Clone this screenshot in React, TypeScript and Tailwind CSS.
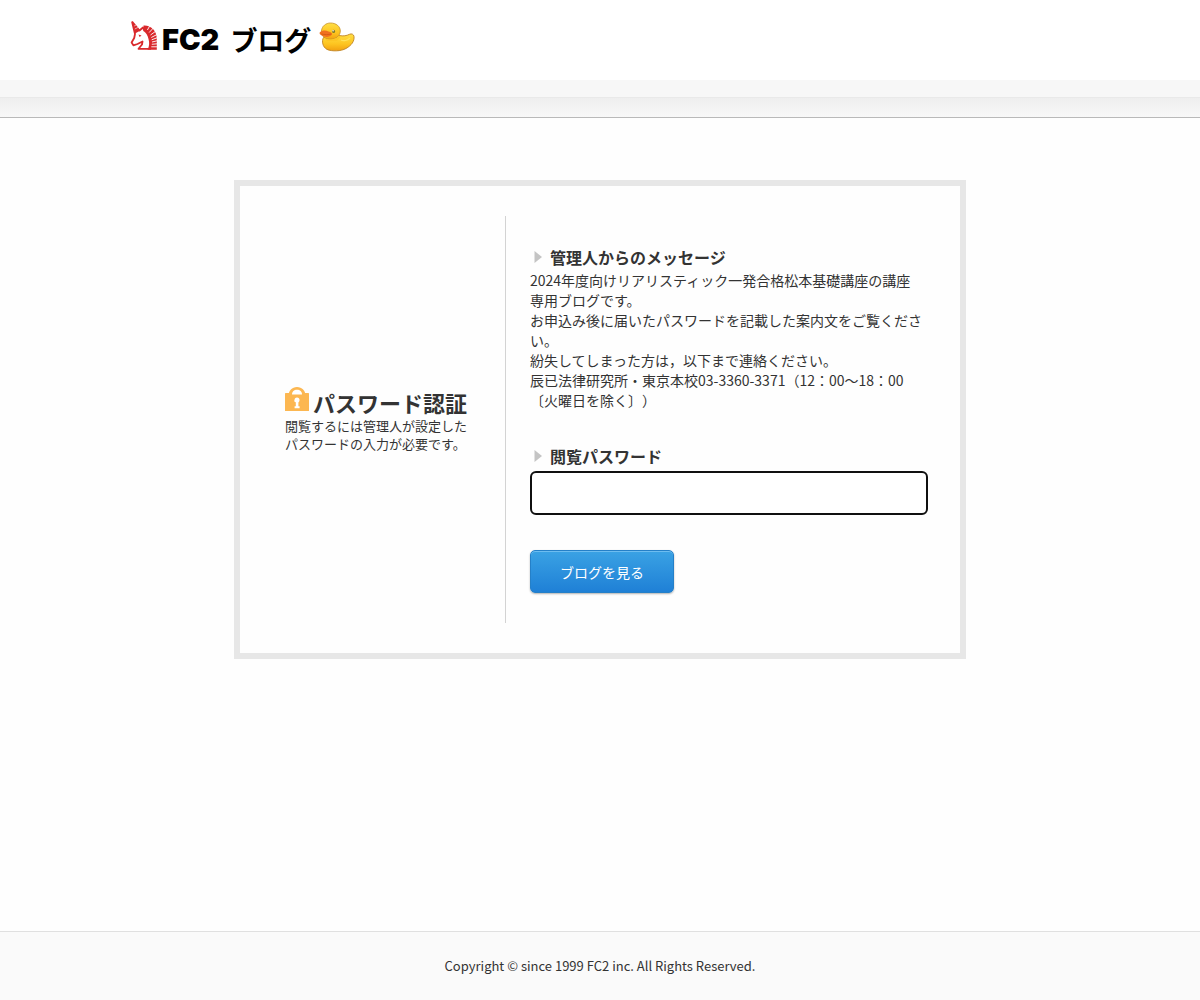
import type { ReactNode } from "react";

function UnicornIcon() {
  return (
    <svg className="w-7 h-8 shrink-0" viewBox="0 0 28 32" fill="none" aria-hidden="true">
      {/* head */}
      <path
        d="M2 1.5L9.5 10.5L13 7.5L14.5 11M2 1.5L5 14L4.2 18L1.6 22.5L3.4 25.4L7.5 24L12.5 21.5L12 24.5L8.5 28.8H21"
        stroke="#d9292c"
        strokeWidth="1.8"
        strokeLinejoin="round"
      />
      <path d="M2 1.5L5 13.5L10 10.8Z" fill="#d9292c" />
      <path d="M4.2 6L6 5M4.8 9L8 7.4" stroke="#fff" strokeWidth="0.6" />
      <path d="M8.5 14.5L11.5 15.5L9.6 17Z" fill="#d9292c" />
      {/* mane */}
      <path
        d="M13.5 5.5C21 5 26.8 10.5 26.8 19V29.7H17.5C19.5 26 19.5 22.5 18.5 19C17.8 15.5 16 12.5 13.5 11Z"
        fill="#d9292c"
      />
      <path
        d="M17.4 10L20 5.5M19.2 12.5L23.5 7.8M20.5 15L26 11M21.3 17.5L27 14.5M21.7 19.8L27 17.8M22 22L27 20.8M21.8 24.3L27 23.8M21.3 26.8L27 26.8"
        stroke="#fff"
        strokeWidth="0.9"
      />
    </svg>
  );
}

function DuckIcon() {
  return (
    <svg className="w-9 h-8 shrink-0" viewBox="0 0 36 32" aria-hidden="true">
      <defs>
        <linearGradient id="duck-body" x1="0" y1="0" x2="0" y2="1">
          <stop offset="0" stopColor="#ffdf45" />
          <stop offset="0.6" stopColor="#fdc420" />
          <stop offset="1" stopColor="#f2a010" />
        </linearGradient>
      </defs>
      <path
        d="M4.5 17.5C2.5 21 3.5 27 8 29.4C13 31.6 22 31.3 27 28.5C32.5 25.5 35.6 21 35 16.5C34.7 14.2 32.5 13.3 30.5 14.3C27.5 15.8 24.5 16.3 20 15.5Z"
        fill="url(#duck-body)"
        stroke="#c08322"
        strokeWidth="0.9"
      />
      <path
        d="M2.4 11C2.9 6 7 3 11.5 3C17.2 3 21.3 6.5 21.3 11C21.3 15.7 17 19.2 11.5 19.2C8 19.2 5 18 3.4 15.5Z"
        fill="url(#duck-body)"
        stroke="#c79128"
        strokeWidth="0.8"
      />
      <path d="M6 18.3C10 20.5 17 19.8 20 15.8L22 16.5L18 21L8 21Z" fill="#fdc624" />
      <path d="M0.8 12.2C3.1 10.2 6.8 10 9.5 11.4C12 12 13.4 13.2 13 14.4C11 17.2 6.5 17.6 3.3 15.8C1.3 15 0 13.3 0.8 12.2Z" fill="#f0701f" />
      <path d="M2.3 14C5.5 14.8 9.5 14.8 12.3 14" stroke="#cf540f" strokeWidth="0.7" fill="none" />
      <ellipse cx="14.6" cy="11.4" rx="1.5" ry="1.7" fill="#7b7a2c" />
      <circle cx="14.1" cy="10.8" r="0.7" fill="#fff" />
      <path d="M22 20C24.5 21.5 28.5 20.5 31 18" stroke="#ffe25a" strokeWidth="1.2" fill="none" />
    </svg>
  );
}

function LockIcon() {
  return (
    <svg className="w-6 h-6 shrink-0" viewBox="0 0 24 24" aria-hidden="true">
      <path d="M3.5 9C3.5 3.5 7 0 12 0S20.5 3.5 20.5 9Z" fill="#fcb751" />
      <rect y="6" width="24" height="18" rx="0.5" fill="#fcb751" />
      <path d="M7 7.6C7 4.8 9 2.8 12 2.8S17 4.8 17 7.6Z" fill="#fff" />
      <circle cx="12" cy="13" r="2.5" fill="#fff" />
      <path d="M9.6 13H13.4V19.2H14.6V21.2H9.6V19.2H10.8V15H9.6Z" fill="#fff" />
    </svg>
  );
}

function SectionTitle({ children }: { children: ReactNode }) {
  return (
    <span className="flex items-center pl-1 text-base font-bold leading-6">
      <svg className="w-2 h-3 mr-2 shrink-0" viewBox="0 0 8 12" aria-hidden="true">
        <path d="M0.5 0L8 6L0.5 12Z" fill="#c4c4c4" />
      </svg>
      {children}
    </span>
  );
}

export default function App() {
  const message = [
    "2024年度向けリアリスティック一発合格松本基礎講座の講座専用ブログです。",
    "お申込み後に届いたパスワードを記載した案内文をご覧ください。",
    "紛失してしまった方は，以下まで連絡ください。",
    "辰已法律研究所・東京本校03-3360-3371（12：00～18：00〔火曜日を除く〕）",
  ];

  return (
    <div lang="ja" className="min-h-screen flex flex-col bg-[#fefefe] text-[#333] font-['Noto_Sans_CJK_JP',sans-serif]">
      <header>
        <div className="h-20 bg-white">
          <div className="max-w-[940px] mx-auto pt-5">
            <a href="#" className="inline-flex items-start text-black">
              <UnicornIcon />
              <span className="ml-1 pt-1 text-[29px] leading-8 font-black font-[Inter,sans-serif]">FC2</span>
              <span className="ml-[11px] pt-1 text-[27px] leading-8 font-bold">ブログ</span>
              <span className="ml-2">
                <DuckIcon />
              </span>
            </a>
          </div>
        </div>
        {/* Sub navigation strip */}
        <div className="h-[17px] bg-[#f7f7f7]"></div>
        <div className="h-[21px] border-t border-b border-t-[#e9e9e9] border-b-[#b9b9b9] bg-linear-to-b from-[#eeeeee] to-[#f8f8f8]"></div>
      </header>

      <main className="px-4 pt-[62px] pb-16">
        <div className="flex max-w-[732px] mx-auto py-[30px] border-6 border-[#e7e7e7]">
          <div className="flex flex-col justify-center w-[266px] shrink-0 pl-[45px] border-r border-[#d3d3d3]">
            <h1 className="flex items-start gap-1 text-[22px] leading-[30px] font-bold">
              <LockIcon />
              <span>パスワード認証</span>
            </h1>
            <p className="text-[13px] leading-[18px]">
              閲覧するには管理人が設定した
              <br />
              パスワードの入力が必要です。
            </p>
          </div>

          <form className="flex-1 min-w-0 pt-[29px] pb-[30px] pl-6 pr-8" onSubmit={(e) => e.preventDefault()}>
            <h2>
              <SectionTitle>管理人からのメッセージ</SectionTitle>
            </h2>
            <div className="mt-px pr-1.5 text-sm leading-5 [text-spacing-trim:space-all]">
              {message.map((line) => (
                <p key={line}>{line}</p>
              ))}
            </div>

            <label htmlFor="password" className="block mt-[34px]">
              <SectionTitle>閲覧パスワード</SectionTitle>
            </label>
            <input
              id="password"
              type="password"
              className="block w-full h-11 mt-[3px] px-3 bg-white border-2 border-[#101010] rounded-md outline-none"
            />
            <button
              type="submit"
              className="block w-36 h-[43px] mt-[35px] rounded-[5px] border border-[#2580c8] bg-linear-to-b from-[#3aa2e4] to-[#1f80d6] text-sm text-white shadow-[inset_0_1px_0_#6dbdf0,0_1px_2px_rgba(0,0,0,0.3)]"
            >
              ブログを見る
            </button>
          </form>
        </div>
      </main>

      <footer className="mt-auto py-6 border-t border-[#e0e0e0] bg-[#fafafa] text-center">
        <p className="text-[13px] leading-5">Copyright © since 1999 FC2 inc. All Rights Reserved.</p>
      </footer>
    </div>
  );
}
